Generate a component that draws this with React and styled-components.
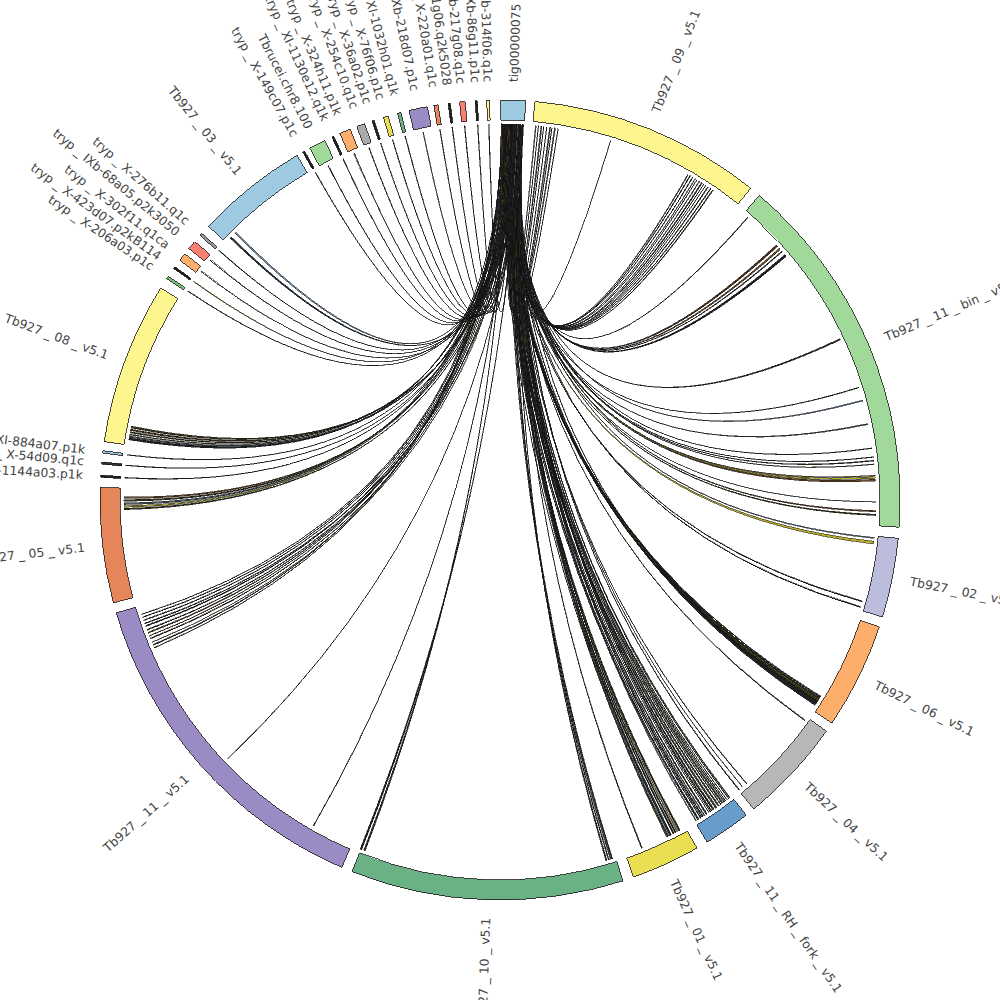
import React from 'react';
import styled, { createGlobalStyle } from 'styled-components';

const GlobalStyle = createGlobalStyle`
  html, body {
    margin: 0;
    padding: 0;
    background: #fff;
  }
  body {
    font-family: "DejaVu Sans", Verdana, sans-serif;
    overflow: hidden;
  }
`;

const Page = styled.div`
  width: 1000px;
  height: 1000px;
  background: #fff;
  overflow: hidden;
`;

const Plot = styled.svg`
  display: block;
  width: 1000px;
  height: 1000px;
  overflow: hidden;
`;

const Ideogram = styled.path`
  fill: ${(p) => p.$fill};
  stroke: #1a1a1a;
  stroke-width: 0.8;
  shape-rendering: crispEdges;
`;

const Ribbon = styled.path`
  fill: ${(p) => p.$fill};
  stroke: #111;
  stroke-width: 0.5;
  shape-rendering: crispEdges;
`;

const Label = styled.text`
  font-family: "DejaVu Sans", Verdana, sans-serif;
  font-size: 12.3px;
  fill: #444;
  dominant-baseline: central;
`;

const CX = 500;
const CY = 500;
const R_IN = 380;
const R_OUT = 400;
const R_LINK = 376;
const R_LABEL = 418;

// angles are compass degrees, clockwise from the top
const CHROMS = [
  { name: 'tig00000075', start: 0.1, end: 3.7, color: '#9ecae1' },
  { name: 'Tb927_09_v5.1', start: 5.0, end: 38.8, color: '#fdf58d' },
  { name: 'Tb927_11_bin_v5.1', start: 40.4, end: 93.9, color: '#a1d99b' },
  { name: 'Tb927_02_v5.1', start: 95.5, end: 107.0, color: '#bcbddc' },
  { name: 'Tb927_06_v5.1', start: 108.5, end: 123.9, color: '#fdae6b' },
  { name: 'Tb927_04_v5.1', start: 125.3, end: 140.6, color: '#b7b7b7' },
  { name: 'Tb927_11_RH_fork_v5.1', start: 142.0, end: 148.8, color: '#679ccb' },
  { name: 'Tb927_01_v5.1', start: 150.5, end: 160.5, color: '#eadf52' },
  { name: 'Tb927_10_v5.1', start: 162.1, end: 201.7, color: '#6bb186' },
  { name: 'Tb927_11_v5.1', start: 203.3, end: 253.6, color: '#9a8bc4' },
  { name: 'Tb927_05_v5.1', start: 255.1, end: 271.8, color: '#e6845a' },
  { name: 'tryp_XI-1144a03.p1k', at: 273.4, width: 0.3, color: '#222' },
  { name: 'tryp_X-54d09.q1c', at: 275.3, width: 0.3, color: '#333' },
  { name: 'tryp_XI-884a07.p1k', at: 276.9, width: 0.35, color: '#9ecae1' },
  { name: 'Tb927_08_v5.1', start: 278.4, end: 302.0, color: '#fdf58d' },
  { name: 'tryp_X-206a03.p1c', at: 303.8, width: 0.4, color: '#74c476' },
  { name: 'tryp_X-423d07.p2kB114', at: 305.5, width: 0.3, color: '#222' },
  { name: 'tryp_X-302f11.q1ca', at: 307.4, width: 1.2, color: '#fdae6b' },
  { name: 'tryp_IXb-68a05.p2k3050', at: 309.6, width: 1.3, color: '#fb8072' },
  { name: 'tryp_X-276b11.q1c', at: 311.6, width: 0.4, color: '#999' },
  { name: 'Tb927_03_v5.1', start: 313.2, end: 329.5, color: '#9ecae1' },
  { name: 'tryp_X-149c07.p1c', at: 330.6, width: 0.3, color: '#222' },
  { name: 'Tbrucei.chr8.100', at: 332.8, width: 2.4, color: '#a1d99b' },
  { name: 'tryp_XI-1130e12.q1k', at: 335.3, width: 0.3, color: '#222' },
  { name: 'tryp_X-324h11.p1k', at: 337.2, width: 1.6, color: '#fdae6b' },
  { name: 'tryp_X-254c10.q1c', at: 339.6, width: 1.2, color: '#aaa' },
  { name: 'tryp_X-36a02.p1c', at: 341.5, width: 0.3, color: '#222' },
  { name: 'tryp_X-76f06.p1c', at: 343.4, width: 0.7, color: '#eadf52' },
  { name: 'tryp_XI-1032h01.q1k', at: 345.4, width: 0.5, color: '#6bb186' },
  { name: 'tryp_IXb-218d07.p1c', at: 348.2, width: 2.7, color: '#9a8bc4' },
  { name: 'tryp_X-220a01.q1c', at: 350.8, width: 0.6, color: '#e6845a' },
  { name: 'tryp_X-11g06.q2k5028', at: 352.7, width: 0.3, color: '#222' },
  { name: 'tryp_IXb-217g08.q1c', at: 354.6, width: 0.8, color: '#fb8072' },
  { name: 'tryp_IXb-86g11.p1c', at: 356.6, width: 0.3, color: '#222' },
  { name: 'tryp_IXb-314f06.q1c', at: 358.3, width: 0.4, color: '#fdf58d' },
].map((c) =>
  c.at !== undefined
    ? { ...c, start: c.at - c.width / 2, end: c.at + c.width / 2, small: true }
    : c
);

// target ranges of the links leaving tig00000075: [from, to, count, width]
const LINK_GROUPS = [
  [5.4, 8.8, 9, 0.12],
  [17.0, 17.3, 1, 0.1],
  [30.0, 34.4, 12, 0.12],
  [41.1, 41.4, 1, 0.1],
  [47.3, 49.2, 4, 0.25],
  [64.3, 64.8, 1, 0.2],
  [72.3, 72.8, 1, 0.1],
  [74.4, 74.9, 1, 0.1],
  [78.0, 78.4, 1, 0.1],
  [81.8, 82.3, 1, 0.1],
  [83.4, 84.5, 3, 0.12],
  [86.2, 86.8, 3, 0.2],
  [90.1, 90.5, 1, 0.1],
  [91.6, 92.2, 2, 0.15],
  [95.7, 96.3, 2, 0.3],
  [105.6, 106.4, 2, 0.1],
  [121.5, 122.8, 9, 0.25],
  [125.6, 125.9, 1, 0.1],
  [139.0, 140.4, 3, 0.1],
  [142.3, 148.5, 26, 0.1],
  [151.4, 153.6, 12, 0.15],
  [157.7, 157.9, 1, 0.1],
  [162.6, 163.4, 4, 0.2],
  [201.0, 201.6, 2, 0.2],
  [209.6, 209.9, 1, 0.1],
  [226.3, 226.6, 1, 0.1],
  [246.8, 252.3, 12, 0.12],
  [268.5, 270.2, 5, 0.25],
  [279.2, 281.0, 6, 0.25],
  [314.2, 315.2, 2, 0.25],
];

const RIBBON_FILLS = [
  '#2e3526', '#3b3a1c', '#2a3340', '#4a3422', '#1f2a2e', '#232323',
  '#5e5a1e', '#4c5a66', '#6d4a24', '#b5ab2c', '#6f93b0', '#3d2f3a',
];

function mulberry32(seed) {
  let a = seed;
  return () => {
    a |= 0;
    a = (a + 0x6d2b79f5) | 0;
    let t = Math.imul(a ^ (a >>> 15), 1 | a);
    t = (t + Math.imul(t ^ (t >>> 7), 61 | t)) ^ t;
    return ((t ^ (t >>> 14)) >>> 0) / 4294967296;
  };
}

const pt = (deg, r) => {
  const a = (deg * Math.PI) / 180;
  return [CX + r * Math.sin(a), CY - r * Math.cos(a)];
};

const f = (n) => n.toFixed(2);

function segmentPath(start, end) {
  const [x1, y1] = pt(start, R_OUT);
  const [x2, y2] = pt(end, R_OUT);
  const [x3, y3] = pt(end, R_IN);
  const [x4, y4] = pt(start, R_IN);
  const large = end - start > 180 ? 1 : 0;
  return `M${f(x1)},${f(y1)} A${R_OUT},${R_OUT} 0 ${large} 1 ${f(x2)},${f(y2)} L${f(x3)},${f(y3)} A${R_IN},${R_IN} 0 ${large} 0 ${f(x4)},${f(y4)} Z`;
}

function ribbonPath(a1, a2, b1, b2) {
  const [ax1, ay1] = pt(a1, R_LINK);
  const [ax2, ay2] = pt(a2, R_LINK);
  const [bx1, by1] = pt(b1, R_LINK);
  const [bx2, by2] = pt(b2, R_LINK);
  return `M${f(ax1)},${f(ay1)} A${R_LINK},${R_LINK} 0 0 1 ${f(ax2)},${f(ay2)} Q${CX},${CY} ${f(bx1)},${f(by1)} A${R_LINK},${R_LINK} 0 0 1 ${f(bx2)},${f(by2)} Q${CX},${CY} ${f(ax1)},${f(ay1)} Z`;
}

function buildLinks() {
  const rand = mulberry32(11);
  const links = [];
  const add = (b, bw) => {
    const a = 0.2 + rand() * 3.3;
    const aw = 0.05 + rand() * 0.1;
    const fill = RIBBON_FILLS[Math.floor(rand() * RIBBON_FILLS.length)];
    links.push({ a1: a, a2: a + aw, b1: b, b2: b + bw, fill });
  };
  LINK_GROUPS.forEach(([from, to, count, width]) => {
    for (let i = 0; i < count; i++) {
      const t = count === 1 ? 0.5 : i / (count - 1);
      const b = from + (to - from) * t + (rand() - 0.5) * 0.15;
      add(b, width * (0.5 + rand()));
    }
  });
  CHROMS.filter((c) => c.small).forEach((c) => {
    add(c.at - 0.05, 0.1);
  });
  return links;
}

const LINKS = buildLinks();

function labelProps(c) {
  const mid = (c.start + c.end) / 2;
  const [x, y] = pt(mid, R_LABEL);
  const right = mid < 180;
  const rot = right ? mid - 90 : mid - 270;
  return {
    x: 0,
    y: 0,
    transform: `translate(${f(x)},${f(y)}) rotate(${f(rot)})`,
    textAnchor: right ? 'start' : 'end',
  };
}

const shown = (name) => name.replace(/_/g, ' _ ');

export default function App() {
  return (
    <Page>
      <GlobalStyle />
      <Plot viewBox="0 0 1000 1000" xmlns="http://www.w3.org/2000/svg">
        <g>
          {LINKS.map((l, i) => (
            <Ribbon key={i} d={ribbonPath(l.a1, l.a2, l.b1, l.b2)} $fill={l.fill} />
          ))}
        </g>
        <g>
          {CHROMS.map((c) => (
            <Ideogram key={c.name} d={segmentPath(c.start, c.end)} $fill={c.color} />
          ))}
        </g>
        <g>
          {CHROMS.map((c) => (
            <Label key={c.name} {...labelProps(c)}>
              {shown(c.name)}
            </Label>
          ))}
        </g>
      </Plot>
    </Page>
  );
}
